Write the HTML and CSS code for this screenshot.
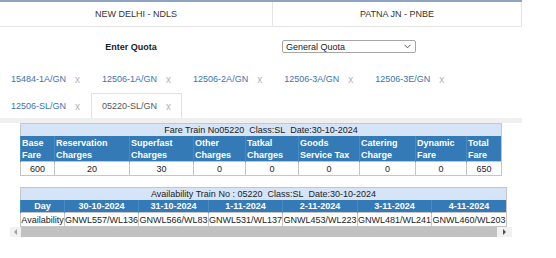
FILE: index.html
```html
<!DOCTYPE html>
<html lang="en">
<head>
    <meta charset="UTF-8">
    <meta name="viewport" content="width=device-width, initial-scale=1.0">
    <title>Fare Enquiry</title>
    <link rel="stylesheet" href="styles.css">
</head>
<body>
    <div class="page">
        <table class="stations">
            <tr>
                <td class="from">NEW DELHI - NDLS</td>
                <td class="to">PATNA JN - PNBE</td>
            </tr>
        </table>

        <div class="quota-row">
            <div class="quota-label">Enter Quota</div>
            <div class="quota-field">
                <div class="select">
                    <span>General Quota</span>
                    <svg width="7" height="5" viewBox="0 0 7 5"><path d="M0.5 0.8 L3.5 3.8 L6.5 0.8" fill="none" stroke="#555" stroke-width="1"/></svg>
                </div>
            </div>
        </div>

        <ul class="tabs">
            <li><a href="#">15484-1A/GN</a><span class="close">x</span></li>
            <li><a href="#">12506-1A/GN</a><span class="close">x</span></li>
            <li><a href="#">12506-2A/GN</a><span class="close">x</span></li>
            <li><a href="#">12506-3A/GN</a><span class="close">x</span></li>
            <li><a href="#">12506-3E/GN</a><span class="close">x</span></li>
            <li><a href="#">12506-SL/GN</a><span class="close">x</span></li>
            <li class="active"><a href="#">05220-SL/GN</a><span class="close">x</span></li>
        </ul>

        <div class="tab-content">
            <table class="fare">
                <tr>
                    <td class="caption" colspan="9">Fare Train No05220&nbsp; Class:SL&nbsp; Date:30-10-2024</td>
                </tr>
                <tr class="head">
                    <th style="width:31px">Base Fare</th>
                    <th style="width:72px">Reservation Charges</th>
                    <th style="width:61px">Superfast Charges</th>
                    <th style="width:49px">Other Charges</th>
                    <th style="width:50px">Tatkal Charges</th>
                    <th style="width:58px">Goods Service Tax</th>
                    <th style="width:53px">Catering Charge</th>
                    <th style="width:48px">Dynamic Fare</th>
                    <th>Total Fare</th>
                </tr>
                <tr class="data">
                    <td>600</td>
                    <td>20</td>
                    <td>30</td>
                    <td>0</td>
                    <td>0</td>
                    <td>0</td>
                    <td>0</td>
                    <td>0</td>
                    <td>650</td>
                </tr>
            </table>

            <div class="avail-scroll">
                <table class="avail">
                    <tr>
                        <td class="caption" colspan="7">Availability Train No : 05220&nbsp; Class:SL&nbsp; Date:30-10-2024</td>
                    </tr>
                    <tr class="head">
                        <th style="width:43px">Day</th>
                        <th style="width:73px">30-10-2024</th>
                        <th style="width:69px">31-10-2024</th>
                        <th style="width:73px">1-11-2024</th>
                        <th style="width:74px">2-11-2024</th>
                        <th style="width:73px">3-11-2024</th>
                        <th>4-11-2024</th>
                    </tr>
                    <tr class="data">
                        <td>Availability</td>
                        <td>GNWL557/WL136</td>
                        <td>GNWL566/WL83</td>
                        <td>GNWL531/WL137</td>
                        <td>GNWL453/WL223</td>
                        <td>GNWL481/WL241</td>
                        <td>GNWL460/WL203</td>
                    </tr>
                </table>
            </div>
            <div class="scrollbar">
                <span class="arrow left"></span>
                <span class="thumb"></span>
                <span class="arrow right"></span>
            </div>
        </div>
    </div>
</body>
</html>
```
FILE: styles.css
```css
body {
    margin: 0;
    background: #ffffff;
    font-family: "Liberation Sans", Arial, sans-serif;
    font-size: 9px;
    color: #333333;
}
.page {
    width: 522px;
}
.stations {
    width: 522px;
    border-collapse: collapse;
    border-top: 2px solid #8ea3c2;
}
.stations td {
    height: 24px;
    padding: 0;
    text-align: center;
    border-right: 1px solid #e4e4e4;
    border-bottom: 1px solid #e4e4e4;
}
.stations .from {
    width: 272px;
}
.quota-row {
    display: grid;
    grid-template-columns: 262px 1fr;
    align-items: center;
    margin-top: 13px;
    height: 13px;
}
.quota-label {
    text-align: center;
    font-weight: bold;
    color: #222222;
}
.quota-field {
    padding-left: 20px;
}
.select {
    width: 126px;
    height: 11px;
    padding: 0 3px;
    display: flex;
    align-items: center;
    justify-content: space-between;
    border: 1px solid #a6a6a6;
    border-radius: 2px;
    color: #222222;
}
.select svg {
    margin-right: 1px;
}
.tabs {
    list-style: none;
    margin: 13px 0 0 0;
    padding: 0;
    display: flex;
    flex-wrap: wrap;
    row-gap: 2px;
}
.tabs li {
    height: 24px;
    padding: 0 10px 0 10px;
    display: flex;
    align-items: center;
    border: 1px solid transparent;
    border-bottom: none;
}
.tabs li a {
    color: #3a73b4;
    text-decoration: none;
}
.tabs .close {
    margin-left: 9px;
    color: #b3b3b3;
    font-size: 10px;
}
.tabs li.active {
    border-color: #e2e2e2;
    background: #ffffff;
}
.tabs li.active a {
    color: #555555;
}
.tab-content {
    border-top: 5px solid #efefef;
}
.fare, .avail {
    border-collapse: collapse;
    border: 1px solid #c6c6c6;
}
.fare {
    width: 482px;
    margin: 0 auto;
}
.caption {
    background: #d5e4f7;
    text-align: center;
    height: 12px;
    padding: 0;
    color: #222222;
}
.head th {
    background: #337ab7;
    color: #ffffff;
    font-weight: bold;
    padding: 0 1px;
    border-left: 1px solid #4a8ac2;
}
.fare .head th {
    text-align: left;
    line-height: 12px;
    height: 25px;
}
.data td {
    border: 1px solid #c6c6c6;
    text-align: center;
    padding: 0;
    height: 13px;
    color: #222222;
}
.avail-scroll {
    width: 492px;
    margin: 11px 0 0 10px;
    padding-left: 10px;
    overflow: hidden;
}
.avail {
    width: 487px;
    white-space: nowrap;
}
.avail .head th {
    text-align: center;
    height: 12px;
    padding: 0;
}
.avail .data td {
    height: 13px;
}
.scrollbar {
    width: 502px;
    height: 10px;
    margin-left: 10px;
    display: flex;
    align-items: center;
    background: #f1f1f1;
}
.thumb {
    flex: 1;
    height: 10px;
    background: #c1c1c1;
}
.arrow {
    width: 11px;
    height: 10px;
    display: flex;
    align-items: center;
    justify-content: center;
}
.arrow.left::before {
    content: "";
    border-top: 3px solid transparent;
    border-bottom: 3px solid transparent;
    border-right: 3px solid #a3a3a3;
}
.arrow.right {
    width: 15px;
}
.arrow.right::before {
    content: "";
    border-top: 3px solid transparent;
    border-bottom: 3px solid transparent;
    border-left: 3px solid #505050;
}
```
